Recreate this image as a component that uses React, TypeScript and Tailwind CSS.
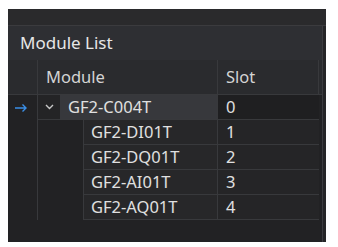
import React from "react";

const children = [
  { name: "GF2-DI01T", slot: 1 },
  { name: "GF2-DQ01T", slot: 2 },
  { name: "GF2-AI01T", slot: 3 },
  { name: "GF2-AQ01T", slot: 4 },
];

const App: React.FC = () => {
  return (
    <div
      className="w-[338px] h-[247px] bg-white pt-[9px] pl-[8px]"
      style={{ fontFamily: '"Noto Sans", "Open Sans", sans-serif' }}
    >
      <div className="w-[318px] h-[233px] bg-[#252527] flex flex-col">
        <div className="h-[17px] bg-[#2a2a2c] border-b border-[#3b3b3e]" />

        <div className="flex-1 flex flex-col w-[315px] border-r border-[#3c3c40]">
          <div className="h-[34px] bg-[#2e2f33] flex items-center pl-[12px] text-[17px] text-[#e6e6e6]">
            Module List
          </div>

          {/* grid header */}
          <div className="h-[35px] flex bg-[#2a2b2e] border-b border-[#38393c] text-[16.5px] text-[#d4d4d4]">
            <div className="w-[30px] border-r border-[#38393c]" />
            <div className="w-[180px] border-r border-[#38393c] flex items-center pl-[8px]">Module</div>
            <div className="w-[101px] border-r border-[#38393c] flex items-center pl-[8px]">Slot</div>
          </div>

          <div className="flex-1 flex bg-[#222224] text-[16.5px] text-[#e0e0e0]">
            <div className="w-[30px] flex flex-col">
              <div className="h-[125px] border-r border-[#38393c] flex flex-col">
                <div className="h-[25px] flex items-center pl-[6px]">
                  <svg width="14" height="10" viewBox="0 0 14 10" fill="none" stroke="#3a8ee6" strokeWidth="1.4">
                    <path d="M1 5h11M8.5 1.5 12 5l-3.5 3.5" />
                  </svg>
                </div>
              </div>
            </div>

            <div className="w-[281px] flex flex-col">
              {/* parent row */}
              <div className="h-[25px] flex border-b border-[#38393c]">
                <div className="w-[22px] flex items-center justify-center bg-[#242426]">
                  <svg width="9" height="6" viewBox="0 0 9 6" fill="none" stroke="#c8c8c8" strokeWidth="1.4">
                    <path d="M1 1l3.5 3.5L8 1" />
                  </svg>
                </div>
                <div className="w-[158px] bg-[#37383c] flex items-center pl-[8px] border-r border-[#38393c]">
                  GF2-C004T
                </div>
                <div className="w-[101px] bg-[#1f1f21] flex items-center pl-[8px]">0</div>
              </div>

              {children.map((c) => (
                <div key={c.name} className="h-[25px] flex">
                  <div className="w-[45px]" />
                  <div className="w-[135px] bg-[#272729] flex items-center pl-[7px] border-l border-b border-r border-[#38393c]">
                    {c.name}
                  </div>
                  <div className="w-[101px] bg-[#252527] flex items-center pl-[8px] border-b border-[#38393c]">
                    {c.slot}
                  </div>
                </div>
              ))}
            </div>
          </div>
        </div>
      </div>
    </div>
  );
};

export default App;
